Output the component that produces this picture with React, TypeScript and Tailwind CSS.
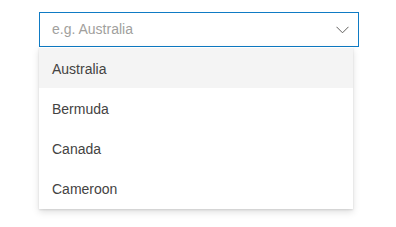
import React, { useState } from 'react';

const countries = ['Australia', 'Bermuda', 'Canada', 'Cameroon'];

const ChevronDown: React.FC = () => (
  <svg width="13" height="8" viewBox="0 0 13 8" fill="none">
    <path d="M0.5 0.8 L6.5 6.8 L12.5 0.8" stroke="#605e5c" strokeWidth="1" />
  </svg>
);

const App: React.FC = () => {
  const [hovered] = useState('Australia');

  return (
    <div
      className="min-h-screen bg-white pl-[39px] pt-[12px]"
      style={{ fontFamily: '"Liberation Sans", Arial, sans-serif' }}
    >
      <div className="relative w-[320px]">
        {/* combo input */}
        <div className="flex h-[35px] items-center justify-between border border-[#0f7bc4] bg-white pl-[12px] pr-[9px]">
          <span className="text-[14px] text-[#a19f9d]">e.g. Australia</span>
          <ChevronDown />
        </div>

        {/* options callout */}
        <div className="absolute left-0 top-full w-[314px] bg-white py-[1px] shadow-[0_3.2px_7.2px_rgba(0,0,0,0.13),0_0.6px_1.8px_rgba(0,0,0,0.11)]">
          {countries.map((c) => (
            <div
              key={c}
              className={
                'flex h-[40px] items-center pl-[13px] pt-[3px] text-[14px] text-[#444342] ' +
                (c === hovered ? 'bg-[#f4f4f4]' : 'bg-white')
              }
            >
              {c}
            </div>
          ))}
        </div>
      </div>
    </div>
  );
};

export default App;
